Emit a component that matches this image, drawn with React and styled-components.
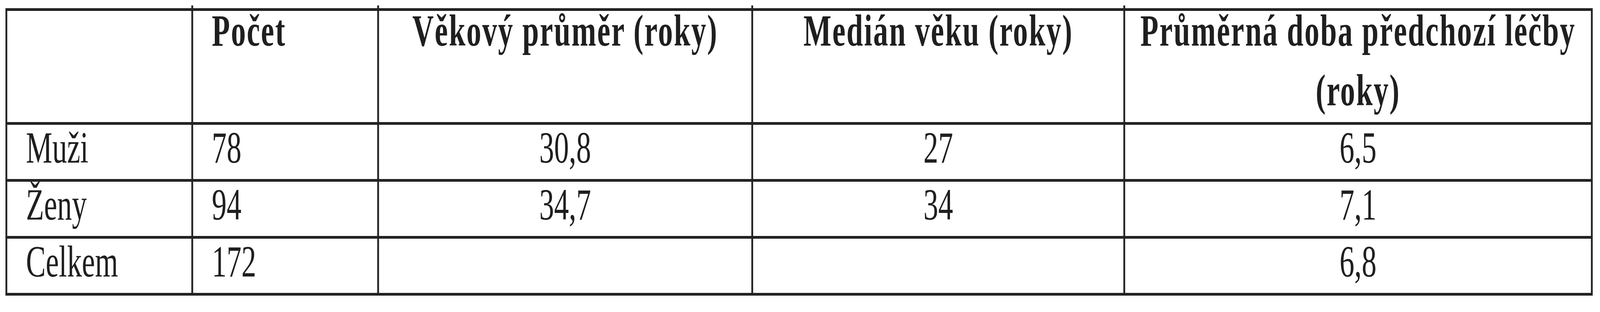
import React, { useState, useEffect } from "react";
import styled, { createGlobalStyle } from "styled-components";

const Global = createGlobalStyle`
  html, body {
    margin: 0;
    padding: 0;
    background: #ffffff;
    overflow: hidden;
  }
  body {
    font-family: "Liberation Serif", "Times New Roman", serif;
    color: #1f1f1f;
  }
`;

const DESIGN_WIDTH = 6163;
const LINE = "#232323";

const Frame = styled.div`
  width: ${DESIGN_WIDTH}px;
  height: 800px;
  transform-origin: 0 0;
`;

const Page = styled.main`
  padding: 21px 0 0 21px;
  background: #ffffff;
`;

const Grid = styled.div`
  display: grid;
  grid-template-columns: 709px 709px 1434px 1426px 1794px;
  grid-template-rows: 285px repeat(3, 139px);
  gap: 7px;
  padding: 7px;
  width: max-content;
  background: ${LINE};
`;

const HeadCell = styled.div`
  position: relative;
  background: #ffffff;
  padding: ${(p) => (p.$align === "left" ? "0 0 0 72px" : "0 10px")};
  text-align: ${(p) => p.$align};
  font-weight: 700;
  font-size: 114px;
  line-height: 153px;
  letter-spacing: 4px;
  color: #1f1f1f;

  &::before {
    content: "";
    display: ${(p) => (p.$tick ? "block" : "none")};
    position: absolute;
    left: -7px;
    top: -14px;
    width: 7px;
    height: 7px;
    background: ${LINE};
  }
`;

const HeadText = styled.div`
  margin-top: -26px;
`;

const BodyCell = styled.div`
  background: #ffffff;
  padding: ${(p) => (p.$align === "left" ? "2px 0 0 72px" : "2px 0 0 0")};
  text-align: ${(p) => p.$align};
  font-size: 114px;
  line-height: 114px;
  color: #1f1f1f;
  white-space: nowrap;
`;

const headers = [
  { text: "", align: "left" },
  { text: "Počet", align: "left" },
  { text: "Věkový průměr (roky)", align: "center" },
  { text: "Medián věku (roky)", align: "center" },
  { text: "Průměrná doba předchozí léčby (roky)", align: "center" },
];

const rows = [
  ["Muži", "78", "30,8", "27", "6,5"],
  ["Ženy", "94", "34,7", "34", "7,1"],
  ["Celkem", "172", "", "", "6,8"],
];

const aligns = ["left", "left", "center", "center", "center"];

function fitScale() {
  if (typeof window === "undefined") return 1;
  return Math.min(1, window.innerWidth / DESIGN_WIDTH);
}

export default function App() {
  const [k, setK] = useState(fitScale);
  useEffect(() => {
    const onResize = () => setK(fitScale());
    window.addEventListener("resize", onResize);
    return () => window.removeEventListener("resize", onResize);
  }, []);

  return (
    <Frame style={{ transform: `scaleX(${k})` }}>
      <Global />
      <Page>
        <Grid role="table">
          {headers.map((h, i) => (
            <HeadCell key={i} role="columnheader" $align={h.align} $tick={i > 0}>
              <HeadText>{h.text}</HeadText>
            </HeadCell>
          ))}
          {rows.map((r, ri) =>
            r.map((c, ci) => (
              <BodyCell key={`${ri}-${ci}`} role="cell" $align={aligns[ci]}>
                {c}
              </BodyCell>
            ))
          )}
        </Grid>
      </Page>
    </Frame>
  );
}
